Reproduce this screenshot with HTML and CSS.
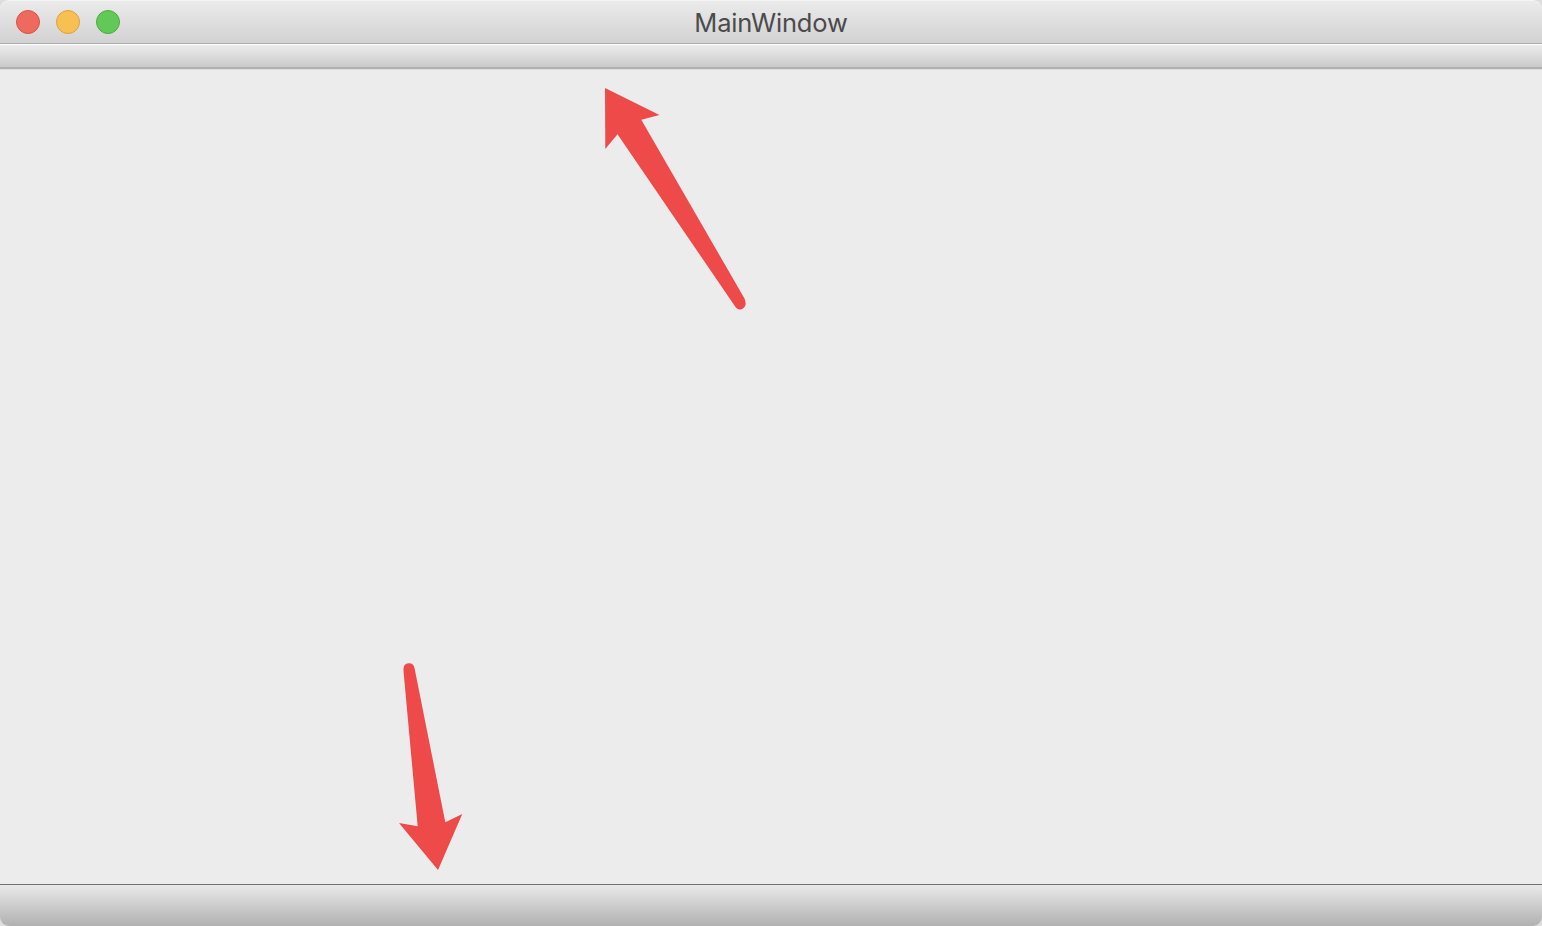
FILE: index.html
```html
<!DOCTYPE html>
<html lang="en">
<head>
<meta charset="utf-8">
<title>MainWindow</title>
<link rel="stylesheet" href="styles.css">
</head>
<body>
<div class="window">
  <header class="titlebar">
    <div class="controls">
      <span class="control close"></span>
      <span class="control minimize"></span>
      <span class="control maximize"></span>
    </div>
    <h1 class="title">MainWindow</h1>
  </header>
  <div class="toolbar"></div>
  <main class="content"></main>
  <footer class="statusbar"></footer>
  <svg class="annotations" viewBox="0 0 1542 926" aria-hidden="true">
    <path d="M605 88L659.500 115L641.300 119.800L744.500 298.500Q747.500 306 742.500 308.700Q738.500 311 735.500 307L617.500 134.300L605.300 149Z"/>
    <path d="M403.500 671Q403 663.200 408.500 663.200Q413.500 662.800 414.500 668L445.300 822.300L462.300 814L438 870L399 823L417.700 826.300Z"/>
  </svg>
</div>
</body>
</html>
```
FILE: styles.css
```css
* { box-sizing: border-box; }
body { margin: 0; background: #dedede; }
.window {
  position: relative;
  display: flex;
  flex-direction: column;
  height: 926px;
  overflow: hidden;
  border-radius: 9px;
  background: #ececec;
}
.titlebar {
  display: grid;
  grid-template-columns: 1fr auto 1fr;
  align-items: center;
  height: 44px;
  padding: 0 16px;
  border-top: 1px solid #f5f5f5;
  border-bottom: 1px solid #acacac;
  border-radius: 9px 9px 0 0;
  background: linear-gradient(#ebebeb, #d2d2d2);
}
.controls { display: flex; gap: 16px; }
.control {
  width: 24px;
  height: 24px;
  border: 1px solid;
  border-radius: 50%;
}
.close { background: #ef6a5e; border-color: #db5148; }
.minimize { background: #f7c050; border-color: #dca13c; }
.maximize { background: #62c856; border-color: #4cac40; }
.title {
  margin: 2px 0 0;
  font: 400 25.5px/30px Inter, sans-serif;
  letter-spacing: -0.15px;
  color: #4b4b4b;
}
.toolbar {
  height: 25px;
  border-top: 1px solid #fff;
  border-bottom: 2px solid #b0b0b0;
  background: linear-gradient(#ececec, #cacaca);
  box-shadow: 0 1px #dfdfdf;
}
.content { flex: 1; }
.statusbar {
  height: 42px;
  border-top: 1px solid #707070;
  background: linear-gradient(#e9e9e9, #b1b1b1);
}
.annotations {
  position: absolute;
  inset: 0;
  width: 1542px;
  height: 926px;
  fill: #ee4a4a;
  pointer-events: none;
}
```
